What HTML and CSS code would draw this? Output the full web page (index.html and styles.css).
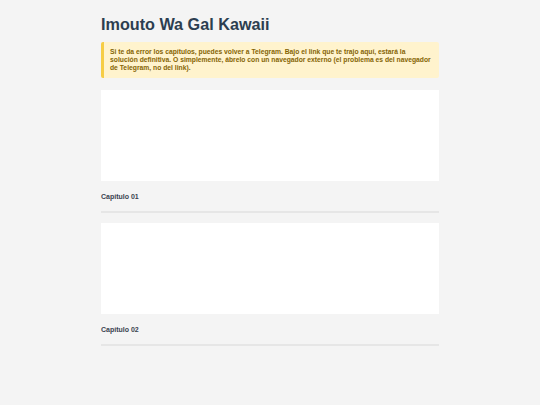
FILE: index.html
```
<!DOCTYPE html>
<html lang="es">
<head>
<meta charset="utf-8">
<title>Imouto Wa Gal Kawaii</title>
<link rel="stylesheet" href="styles.css">
</head>
<body>
<main class="container">
  <h1 class="title">Imouto Wa Gal Kawaii</h1>
  <div class="notice">Si te da error los capítulos, puedes volver a Telegram. Bajo el link que te trajo aquí, estará la solución definitiva. O simplemente, ábrelo con un navegador externo (el problema es del navegador de Telegram, no del link).</div>
  <div class="chapter">
    <div class="thumb"></div>
    <div class="name">Capítulo 01</div>
  </div>
  <div class="chapter">
    <div class="thumb"></div>
    <div class="name">Capítulo 02</div>
  </div>
</main>
</body>
</html>
```
FILE: styles.css
```
html, body {
  margin: 0;
  padding: 0;
  background: #f4f4f4;
}
body {
  font-family: "Liberation Sans", Arial, sans-serif;
  color: #2c3e50;
}
.container {
  width: 338px;
  margin: 0 auto;
  padding-top: 14px;
}
.title {
  margin: 0 0 8px;
  font-size: 16.2px;
  line-height: 20px;
  font-weight: bold;
  color: #2c3e50;
}
.notice {
  background: #fff3cd;
  border-left: 3px solid #f6cd45;
  border-radius: 2px;
  padding: 6px 5px 6px 6px;
  font-size: 6.75px;
  line-height: 8px;
  font-weight: bold;
  color: #856404;
  margin-bottom: 12px;
}
.chapter {
  border-bottom: 2px solid #e6e6e6;
  margin-bottom: 10px;
}
.thumb {
  height: 91px;
  background: #ffffff;
}
.name {
  font-size: 7px;
  font-weight: bold;
  line-height: 10px;
  padding: 11px 0 9px;
  color: #3a4250;
}
```
